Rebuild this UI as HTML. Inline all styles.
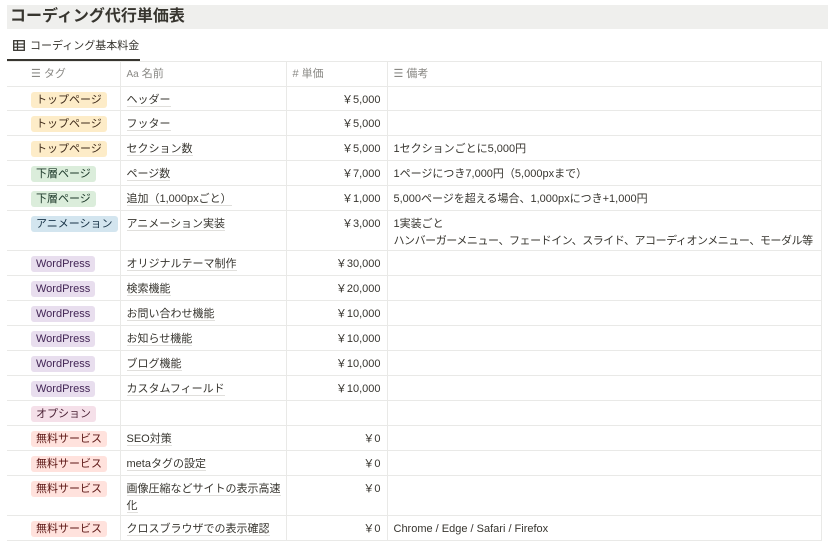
<!DOCTYPE html>
<html><head><meta charset="utf-8"><style>
*{box-sizing:border-box;margin:0;padding:0}
body{width:828px;height:549px;overflow:hidden;background:#fff;font-family:"Liberation Sans","Noto Sans CJK JP",sans-serif;color:#37352f;font-size:11px;position:relative}
.title{position:absolute;left:7px;top:5px;width:821px;height:24px;background:#efefed;font-size:16px;font-weight:bold;line-height:24px;padding-left:3px;color:#37352f}
.tab{position:absolute;left:7px;top:38px;width:133px;height:23px;border-bottom:2px solid #37352f;font-size:11px;line-height:17px;padding-left:6px}
.tab svg{vertical-align:-2px;margin-right:5px}
table{position:absolute;left:7px;top:61px;border-collapse:collapse;table-layout:fixed;width:814px}
td{border-top:1px solid #e9e9e7;border-right:1px solid #e9e9e7;vertical-align:top;padding:5px 6px 0 6px;line-height:17px;white-space:nowrap;overflow:hidden}
tr.h td{color:#8a8985;height:25px;padding-top:4px}
td.c1{padding-left:24px}
td.c3{text-align:right}
.p{display:inline-block;padding:0 5px;border-radius:3px;line-height:16px;font-size:11px}
.y{background:#fdecc8;color:#402c1b}.g{background:#dbeddb;color:#1c3829}.b{background:#d3e5ef;color:#183347}.w{background:#e8deee;color:#412454}.o{background:#f5e0e9;color:#4c2337}.r{background:#ffe2dd;color:#5d1715}
.n{border-bottom:1px solid #e0dfdc}
</style></head><body>
<div class="title">コーディング代行単価表</div>
<div class="tab"><svg width="12" height="11" viewBox="0 0 12 11"><rect x="0.7" y="0.7" width="10.6" height="9.6" fill="none" stroke="#37352f" stroke-width="1.3"/><line x1="0.7" y1="4" x2="11.3" y2="4" stroke="#37352f" stroke-width="1.2"/><line x1="0.7" y1="7.2" x2="11.3" y2="7.2" stroke="#37352f" stroke-width="1.2"/><line x1="4.5" y1="0.7" x2="4.5" y2="10.3" stroke="#37352f" stroke-width="1.2"/></svg>コーディング基本料金</div>
<table>
<colgroup><col style="width:113px"><col style="width:166px"><col style="width:101px"><col style="width:434px"></colgroup>
<tr class="h"><td class="c1">☰ タグ</td><td class="c2"><span style="font-size:10px">Aa</span> 名前</td><td class="c3" style="text-align:left"># 単価</td><td class="c4">☰ 備考</td></tr>
<tr style="height:24px"><td class="c1"><span class="p y">トップページ</span></td><td class="c2"><span class="n">ヘッダー</span></td><td class="c3">￥5,000</td><td class="c4"></td></tr>
<tr style="height:25px"><td class="c1"><span class="p y">トップページ</span></td><td class="c2"><span class="n">フッター</span></td><td class="c3">￥5,000</td><td class="c4"></td></tr>
<tr style="height:25px"><td class="c1"><span class="p y">トップページ</span></td><td class="c2"><span class="n">セクション数</span></td><td class="c3">￥5,000</td><td class="c4">1セクションごとに5,000円</td></tr>
<tr style="height:25px"><td class="c1"><span class="p g">下層ページ</span></td><td class="c2"><span class="n">ページ数</span></td><td class="c3">￥7,000</td><td class="c4">1ページにつき7,000円（5,000pxまで）</td></tr>
<tr style="height:25px"><td class="c1"><span class="p g">下層ページ</span></td><td class="c2"><span class="n">追加（1,000pxごと）</span></td><td class="c3">￥1,000</td><td class="c4">5,000ページを超える場合、1,000pxにつき+1,000円</td></tr>
<tr style="height:40px"><td class="c1"><span class="p b">アニメーション</span></td><td class="c2"><span class="n">アニメーション実装</span></td><td class="c3">￥3,000</td><td class="c4">1実装ごと<br><span style="letter-spacing:-0.45px">ハンバーガーメニュー、フェードイン、スライド、アコーディオンメニュー、モーダル等</span></td></tr>
<tr style="height:25px"><td class="c1"><span class="p w">WordPress</span></td><td class="c2"><span class="n">オリジナルテーマ制作</span></td><td class="c3">￥30,000</td><td class="c4"></td></tr>
<tr style="height:25px"><td class="c1"><span class="p w">WordPress</span></td><td class="c2"><span class="n">検索機能</span></td><td class="c3">￥20,000</td><td class="c4"></td></tr>
<tr style="height:25px"><td class="c1"><span class="p w">WordPress</span></td><td class="c2"><span class="n">お問い合わせ機能</span></td><td class="c3">￥10,000</td><td class="c4"></td></tr>
<tr style="height:25px"><td class="c1"><span class="p w">WordPress</span></td><td class="c2"><span class="n">お知らせ機能</span></td><td class="c3">￥10,000</td><td class="c4"></td></tr>
<tr style="height:25px"><td class="c1"><span class="p w">WordPress</span></td><td class="c2"><span class="n">ブログ機能</span></td><td class="c3">￥10,000</td><td class="c4"></td></tr>
<tr style="height:25px"><td class="c1"><span class="p w">WordPress</span></td><td class="c2"><span class="n">カスタムフィールド</span></td><td class="c3">￥10,000</td><td class="c4"></td></tr>
<tr style="height:25px"><td class="c1"><span class="p o">オプション</span></td><td class="c2"></td><td class="c3"></td><td class="c4"></td></tr>
<tr style="height:25px"><td class="c1"><span class="p r">無料サービス</span></td><td class="c2"><span class="n">SEO対策</span></td><td class="c3">￥0</td><td class="c4"></td></tr>
<tr style="height:25px"><td class="c1"><span class="p r">無料サービス</span></td><td class="c2"><span class="n">metaタグの設定</span></td><td class="c3">￥0</td><td class="c4"></td></tr>
<tr style="height:40px"><td class="c1"><span class="p r">無料サービス</span></td><td class="c2"><span class="n">画像圧縮などサイトの表示高速</span><br><span class="n">化</span></td><td class="c3">￥0</td><td class="c4"></td></tr>
<tr style="height:25px;border-bottom:1px solid #e9e9e7"><td class="c1"><span class="p r">無料サービス</span></td><td class="c2"><span class="n">クロスブラウザでの表示確認</span></td><td class="c3">￥0</td><td class="c4">Chrome / Edge / Safari / Firefox</td></tr>
</table>
</body></html>
